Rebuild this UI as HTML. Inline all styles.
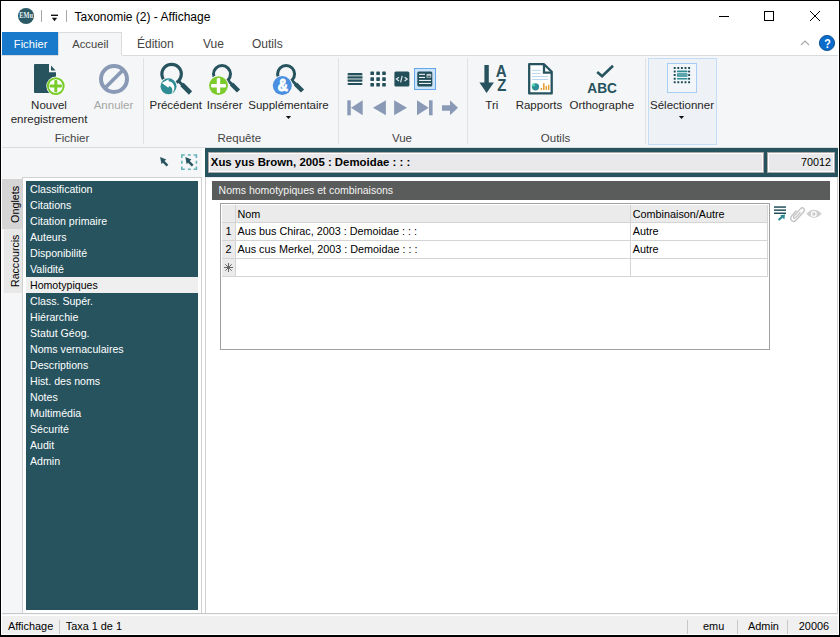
<!DOCTYPE html>
<html><head><meta charset="utf-8">
<style>
*{margin:0;padding:0;box-sizing:border-box}
html,body{width:840px;height:637px;overflow:hidden;background:#000}
body{position:relative;font-family:"Liberation Sans",sans-serif;color:#333}
.a{position:absolute}
.t{position:absolute;white-space:nowrap;line-height:1}
.c{position:absolute;white-space:nowrap;line-height:1;width:120px;text-align:center}
.rl{font-size:11.5px;color:#262626}
.gl{font-size:11.5px;color:#444}
.li{position:absolute;left:30px;font-size:10.6px;color:#fff;white-space:nowrap;line-height:1}
.g{font-size:10.8px;color:#000}
svg{position:absolute;left:0;top:0}
</style></head><body>
<!-- window -->
<div class="a" style="left:1px;top:1px;width:838px;height:634px;background:#fff"></div>

<!-- title bar -->
<div class="t" style="left:74.5px;top:11px;font-size:12px;color:#000">Taxonomie (2) - Affichage</div>

<!-- tabs -->
<div class="a" style="left:2px;top:32px;width:56px;height:23px;background:#1979ca"></div>
<div class="t" style="left:13.8px;top:38.6px;font-size:11.2px;color:#fff">Fichier</div>
<div class="a" style="left:58px;top:32px;width:64px;height:24px;background:#f5f6f7;border:1px solid #dadbdc;border-bottom:none"></div>
<div class="t" style="left:72.3px;top:38.6px;font-size:11.2px;color:#444">Accueil</div>
<div class="t" style="left:137px;top:38px;font-size:12px;color:#444">Édition</div>
<div class="t" style="left:203px;top:38px;font-size:12px;color:#444">Vue</div>
<div class="t" style="left:252px;top:38px;font-size:12px;color:#444">Outils</div>

<!-- ribbon -->
<div class="a" style="left:2px;top:55px;width:836px;height:560px;background:#f5f6f7"></div>
<div class="a" style="left:2px;top:55px;width:56px;height:1px;background:#dadbdc"></div>
<div class="a" style="left:122px;top:55px;width:716px;height:1px;background:#dadbdc"></div>
<div class="a" style="left:2px;top:147px;width:836px;height:1px;background:#dadbdc"></div>
<div class="a" style="left:143px;top:58px;width:1px;height:86px;background:#e1e2e3"></div>
<div class="a" style="left:338px;top:58px;width:1px;height:86px;background:#e1e2e3"></div>
<div class="a" style="left:467px;top:58px;width:1px;height:86px;background:#e1e2e3"></div>
<div class="a" style="left:645px;top:58px;width:1px;height:86px;background:#e1e2e3"></div>
<!-- selected box -->
<div class="a" style="left:648px;top:58px;width:69px;height:87px;background:#eef2f7;border:1px solid #c4dcf5"></div>
<div class="a" style="left:667px;top:63px;width:30px;height:30px;background:#f3f6f9;border:1px solid #a8cdf5"></div>
<!-- selected view icon frame -->
<div class="a" style="left:414px;top:68px;width:22px;height:22px;background:#cce4f7;border:1px solid #66a7e8"></div>

<!-- ribbon labels -->
<div class="c rl" style="left:-11px;top:100.3px">Nouvel</div>
<div class="c rl" style="left:-11px;top:113.8px">enregistrement</div>
<div class="c rl" style="left:53.5px;top:100.3px;color:#a6a6a6">Annuler</div>
<div class="c rl" style="left:115.7px;top:100.3px">Précédent</div>
<div class="c rl" style="left:164.6px;top:100.3px">Insérer</div>
<div class="c rl" style="left:228.5px;top:100.3px">Supplémentaire</div>
<div class="c rl" style="left:431.8px;top:100.3px">Tri</div>
<div class="c rl" style="left:479px;top:100.3px">Rapports</div>
<div class="c rl" style="left:541.8px;top:100.3px">Orthographe</div>
<div class="c rl" style="left:622px;top:100.3px">Sélectionner</div>
<div class="c gl" style="left:12px;top:133.3px">Fichier</div>
<div class="c gl" style="left:179.3px;top:133.3px">Requête</div>
<div class="c gl" style="left:342px;top:133.3px">Vue</div>
<div class="c gl" style="left:495.5px;top:133.3px">Outils</div>

<!-- left panel -->
<div class="a" style="left:2px;top:179px;width:20px;height:50px;background:#d5d5d5"></div>
<div class="a" style="left:4px;top:229px;width:18px;height:64px;background:#e8e8e8"></div>
<div class="a" style="left:22px;top:177px;width:180px;height:437px;background:#fff;border:1px solid #d0d0d0"></div>
<div class="a" style="left:26px;top:181px;width:172px;height:429px;background:#26535e"></div>
<div class="a" style="left:26px;top:277px;width:172px;height:16px;background:#efefef"></div>
<div class="li" style="top:184px">Classification</div>
<div class="li" style="top:200px">Citations</div>
<div class="li" style="top:216px">Citation primaire</div>
<div class="li" style="top:232px">Auteurs</div>
<div class="li" style="top:248px">Disponibilité</div>
<div class="li" style="top:264px">Validité</div>
<div class="li" style="top:280px;color:#000">Homotypiques</div>
<div class="li" style="top:296px">Class. Supér.</div>
<div class="li" style="top:312px">Hiérarchie</div>
<div class="li" style="top:328px">Statut Géog.</div>
<div class="li" style="top:344px">Noms vernaculaires</div>
<div class="li" style="top:360px">Descriptions</div>
<div class="li" style="top:376px">Hist. des noms</div>
<div class="li" style="top:392px">Notes</div>
<div class="li" style="top:408px">Multimédia</div>
<div class="li" style="top:424px">Sécurité</div>
<div class="li" style="top:440px">Audit</div>
<div class="li" style="top:456px">Admin</div>
<div class="t" style="left:10.3px;top:222.8px;font-size:10.8px;color:#000;transform-origin:0 0;transform:rotate(-90deg)">Onglets</div>
<div class="t" style="left:10.3px;top:287px;font-size:10.6px;color:#000;transform-origin:0 0;transform:rotate(-90deg)">Raccourcis</div>

<!-- right panel -->
<div class="a" style="left:202px;top:148px;width:3px;height:466px;background:#fff"></div>
<div class="a" style="left:205px;top:148px;width:633px;height:29px;background:#26535e"></div>
<div class="a" style="left:208px;top:152px;width:556px;height:21px;background:#e9e9eb;border:1px solid #aaa6a6;box-shadow:inset 0 0 0 1px #fff"></div>
<div class="a" style="left:767px;top:152px;width:68px;height:21px;background:#e9e9eb;border:1px solid #aaa6a6;box-shadow:inset 0 0 0 1px #fff"></div>
<div class="t" style="left:210.8px;top:156.5px;font-size:11.4px;font-weight:bold;color:#000">Xus yus Brown, 2005 : Demoidae : : :</div>
<div class="t" style="left:790px;top:157px;font-size:10.8px;color:#000;width:41px;text-align:right">70012</div>

<div class="a" style="left:205px;top:177px;width:633px;height:437px;background:#fff;border-top:1px solid #ebe9e9;border-left:1px solid #d0d0d0;border-right:1px solid #d0d0d0;border-bottom:1px solid #c8c8c8"></div>
<div class="a" style="left:212px;top:181px;width:618px;height:19px;background:#5a5c5b"></div>
<div class="t" style="left:218.6px;top:185px;font-size:10.5px;color:#f4f4f4">Noms homotypiques et combinaisons</div>

<!-- grid -->
<div class="a" style="left:220px;top:203px;width:550px;height:147px;background:#fff;border:1px solid #a0a0a0"></div>
<div class="a" style="left:222px;top:205px;width:546px;height:17px;background:#ebebeb"></div>
<div class="a" style="left:222px;top:205px;width:13px;height:72px;background:#ebebeb"></div>
<div class="a" style="left:222px;top:222px;width:546px;height:1px;background:#d4d4d4"></div>
<div class="a" style="left:222px;top:240px;width:546px;height:1px;background:#d4d4d4"></div>
<div class="a" style="left:222px;top:258px;width:546px;height:1px;background:#d4d4d4"></div>
<div class="a" style="left:222px;top:276px;width:546px;height:1px;background:#d4d4d4"></div>
<div class="a" style="left:235px;top:205px;width:1px;height:72px;background:#d4d4d4"></div>
<div class="a" style="left:630px;top:205px;width:1px;height:72px;background:#d4d4d4"></div>
<div class="a" style="left:767px;top:205px;width:1px;height:72px;background:#d4d4d4"></div>
<div class="t g" style="left:237.5px;top:209px">Nom</div>
<div class="t g" style="left:632.8px;top:209px">Combinaison/Autre</div>
<div class="t g" style="left:225.5px;top:226px">1</div>
<div class="t g" style="left:237.5px;top:226px">Aus bus Chirac, 2003 : Demoidae : : :</div>
<div class="t g" style="left:632.8px;top:226px">Autre</div>
<div class="t g" style="left:225.5px;top:244px">2</div>
<div class="t g" style="left:237.5px;top:244px">Aus cus Merkel, 2003 : Demoidae : : :</div>
<div class="t g" style="left:632.8px;top:244px">Autre</div>

<!-- status bar -->
<div class="a" style="left:2px;top:613px;width:836px;height:1px;background:#c8c8c8"></div>
<div class="a" style="left:2px;top:616px;width:836px;height:18px;background:#f0f0f0"></div>
<div class="t" style="left:8px;top:620.5px;font-size:10.9px;color:#000">Affichage</div>
<div class="a" style="left:59px;top:620px;width:1px;height:14px;background:#c8c8c8"></div>
<div class="t" style="left:65.7px;top:620.5px;font-size:10.9px;color:#000">Taxa 1 de 1</div>
<div class="a" style="left:687px;top:620px;width:1px;height:14px;background:#c8c8c8"></div>
<div class="a" style="left:737px;top:620px;width:1px;height:14px;background:#c8c8c8"></div>
<div class="a" style="left:787px;top:620px;width:1px;height:14px;background:#c8c8c8"></div>
<div class="t" style="left:703px;top:620.5px;font-size:10.9px;color:#000">emu</div>
<div class="t" style="left:748px;top:620.5px;font-size:10.9px;color:#000">Admin</div>
<div class="t" style="left:798.8px;top:620.5px;font-size:10.9px;color:#000">20006</div>

<!-- ICONS -->
<svg width="840" height="637" viewBox="0 0 840 637">
<!-- EMu logo -->
<circle cx="26" cy="16" r="8" fill="#2b5a66"/>
<text x="19.3" y="18" font-family="Liberation Serif" font-size="7.6" font-weight="bold" fill="#e6eef0" textLength="13.6" lengthAdjust="spacingAndGlyphs">EMu</text>
<rect x="41" y="10" width="1" height="12" fill="#a8a8a8"/>
<rect x="66" y="10" width="1" height="12" fill="#a8a8a8"/>
<rect x="51" y="14.6" width="7" height="1.4" fill="#111"/>
<path d="M51.8 17.8 H57.2 L54.5 21.2 Z" fill="#111"/>
<!-- window controls -->
<rect x="719" y="16" width="10" height="1" fill="#000"/>
<rect x="764.5" y="11.5" width="9" height="9" fill="none" stroke="#000" stroke-width="1"/>
<path d="M810 11 L820 21 M820 11 L810 21" stroke="#000" stroke-width="1"/>
<!-- caret + help -->
<path d="M801 45 L805 41 L809 45" fill="none" stroke="#a6a6a6" stroke-width="1.1"/>
<circle cx="827" cy="43" r="7.6" fill="#0b6ccb" stroke="#0c4d8e" stroke-width="0.9"/>
<text transform="translate(827.4,47.8) scale(0.82,1)" text-anchor="middle" font-family="Liberation Sans" font-size="13" font-weight="bold" fill="#fff">?</text>
<!-- new doc -->
<path d="M34 65 Q34 64 35 64 H49 V72.3 H56 V92 Q56 93 55 93 H35 Q34 93 34 92 Z" fill="#26535e"/>
<path d="M51 65.6 L55.6 70.4 H51 Z" fill="#26535e"/>
<circle cx="55.8" cy="86.1" r="9.5" fill="#fff"/>
<circle cx="55.8" cy="86.1" r="7.9" fill="#fff" stroke="#78cd2a" stroke-width="2"/>
<rect x="49.6" y="84.6" width="12.4" height="3" rx="1" fill="#78cd2a"/>
<rect x="54.3" y="79.9" width="3" height="12.4" rx="1" fill="#78cd2a"/>
<!-- annuler -->
<circle cx="114" cy="79" r="13" fill="none" stroke="#8a9ab6" stroke-width="4"/>
<path d="M123.5 69.5 L104.5 88.5" stroke="#8a9ab6" stroke-width="3.8"/>
<!-- magnifier precedent -->
<circle cx="171.6" cy="74.1" r="9.75" fill="none" stroke="#26535e" stroke-width="3.1"/>
<path d="M178.5 81 L183 85.5" stroke="#26535e" stroke-width="3"/>
<path d="M182 84.5 L190.5 93" stroke="#26535e" stroke-width="4.6"/>
<circle cx="168.5" cy="86.3" r="9" fill="#f5f6f7"/>
<circle cx="168.5" cy="86.3" r="8" fill="#2e8c94"/>
<path d="M161.8 83.1 L168.6 79.3 L168.6 81.2 C172.5 81.6 175 85 174.3 89 C173.8 91.5 172.5 93 171.2 93.8 C172.8 91.5 172.9 88.5 170.6 86.8 C170.1 86.5 169.4 86.3 168.8 86.4 L168.4 87.8 Z" fill="#fff"/>
<!-- magnifier inserer -->
<circle cx="222" cy="74.1" r="8.5" fill="none" stroke="#26535e" stroke-width="3"/>
<path d="M228 80.5 L232 84.5" stroke="#26535e" stroke-width="3"/>
<path d="M231.5 84 L238.5 91" stroke="#26535e" stroke-width="4.4"/>
<circle cx="218.5" cy="85.6" r="10.3" fill="#f5f6f7"/>
<circle cx="218.5" cy="85.6" r="9.4" fill="#7ccb2c"/>
<rect x="211" y="84" width="15" height="3.4" rx="1.2" fill="#fff"/>
<rect x="216.8" y="78.1" width="3.4" height="15" rx="1.2" fill="#fff"/>
<!-- magnifier supplementaire -->
<circle cx="286.1" cy="74" r="8.5" fill="none" stroke="#26535e" stroke-width="3"/>
<path d="M292 80.5 L296 84.5" stroke="#26535e" stroke-width="3"/>
<path d="M295.5 84 L302.5 91" stroke="#26535e" stroke-width="4.4"/>
<circle cx="282.3" cy="85.6" r="10.3" fill="#f5f6f7"/>
<circle cx="282.3" cy="85.6" r="9.5" fill="#4a8fe0"/>
<text transform="translate(282.8,91.3) scale(0.88,1)" text-anchor="middle" font-family="Liberation Sans" font-size="16" font-weight="bold" fill="#fff" stroke="#fff" stroke-width="0.9">&amp;</text>
<path d="M285.9 116 H291.1 L288.5 119.1 Z" fill="#111"/>
<!-- view icons -->
<rect x="347.5" y="75" width="15" height="5" fill="#9fb2b7"/>
<rect x="347.5" y="73" width="15" height="2" rx="1" fill="#234f5a"/>
<rect x="347.5" y="76.4" width="15" height="1.9" rx="0.9" fill="#234f5a"/>
<rect x="347.5" y="79.8" width="15" height="1.9" rx="0.9" fill="#234f5a"/>
<rect x="347.5" y="83" width="15" height="2" rx="1" fill="#234f5a"/>
<g fill="#234f5a">
<rect x="370.4" y="71.5" width="3.6" height="3.6" rx="0.6"/><rect x="376.3" y="71.5" width="3.6" height="3.6" rx="0.6"/><rect x="382.2" y="71.5" width="3.6" height="3.6" rx="0.6"/>
<rect x="370.4" y="77.3" width="3.6" height="3.6" rx="0.6"/><rect x="376.3" y="77.3" width="3.6" height="3.6" rx="0.6"/><rect x="382.2" y="77.3" width="3.6" height="3.6" rx="0.6"/>
<rect x="370.4" y="83" width="3.6" height="3.6" rx="0.6"/><rect x="376.3" y="83" width="3.6" height="3.6" rx="0.6"/><rect x="382.2" y="83" width="3.6" height="3.6" rx="0.6"/>
</g>
<rect x="394.4" y="71.5" width="15" height="15" rx="1.5" fill="#234f5a"/>
<path d="M399 77.2 L396.4 79.1 L399 81 M402.2 75.8 L400.6 82.3 M404.6 77.2 L407.2 79.1 L404.6 81" fill="none" stroke="#e2e8ea" stroke-width="1.2"/>
<rect x="417.3" y="71.5" width="15" height="15" rx="1.5" fill="#234f5a"/>
<g fill="#fff">
<rect x="419" y="73.8" width="6" height="1"/>
<rect x="426.6" y="73.9" width="4.6" height="3.7" fill="#c9d3d6"/>
<rect x="427.4" y="75.7" width="3" height="1.3" fill="#46666e"/>
<rect x="419" y="76.9" width="6" height="1"/>
<rect x="419" y="79.9" width="12" height="1"/>
<rect x="419" y="82.9" width="12" height="1"/>
</g>
<!-- nav icons -->
<g fill="#8a9ab6">
<rect x="347.3" y="100.3" width="3.5" height="15"/>
<path d="M351 107.8 L362.7 100.3 V115.3 Z"/>
<path d="M373 107.8 L385.9 100.3 V115.3 Z"/>
<path d="M407 107.8 L394.1 100.3 V115.3 Z"/>
<path d="M428.7 107.8 L417 100.3 V115.3 Z"/>
<rect x="429" y="100.3" width="3.6" height="15"/>
<path d="M442 105.3 H450 V100.3 L458 107.8 L450 115.3 V110.8 H442 Z"/>
</g>
<!-- tri -->
<g fill="#26535e">
<rect x="484.4" y="65" width="4.4" height="18"/>
<path d="M479.4 82.6 H493.9 L486.6 93 Z"/>
<text transform="translate(501.3,77) scale(0.89,1)" text-anchor="middle" font-family="Liberation Sans" font-size="17" font-weight="bold">A</text>
<text transform="translate(501.85,91) scale(0.875,1)" text-anchor="middle" font-family="Liberation Sans" font-size="17" font-weight="bold">Z</text>
</g>
<!-- rapports -->
<path d="M529.2 64.2 H544 L551.7 71.8 V93.4 H529.2 Z" fill="#fff" stroke="#26535e" stroke-width="2.3" stroke-linejoin="round"/>
<path d="M544 64.2 V72.6 H551.7" fill="none" stroke="#26535e" stroke-width="2.3"/>
<g fill="#b9d9f1">
<rect x="532" y="69.9" width="8.5" height="1"/>
<rect x="532" y="73" width="8.5" height="1"/>
<rect x="532" y="76" width="16" height="1"/>
<rect x="532" y="79" width="16" height="1"/>
</g>
<circle cx="535.5" cy="86.8" r="3.6" fill="#2e8c94"/>
<path d="M535 86.3 V82.9 A3.6 3.6 0 0 0 531.6 86.3 Z" fill="#52d3b2"/>
<g fill="#e9a23a">
<rect x="540.6" y="88" width="1.5" height="2"/>
<rect x="543" y="83.2" width="1.6" height="6.8"/>
<rect x="545.5" y="86" width="1.5" height="4"/>
<rect x="547.9" y="84.8" width="1.5" height="5.2"/>
</g>
<!-- orthographe -->
<path d="M597.2 72 L602.1 76.2 L613 65.8" fill="none" stroke="#26535e" stroke-width="2.6"/>
<text x="602.1" y="92.7" text-anchor="middle" font-family="Liberation Sans" font-size="15" font-weight="bold" fill="#26535e" textLength="29.6" lengthAdjust="spacingAndGlyphs">ABC</text>
<!-- selectionner icon -->
<g fill="#1f4c57"><rect x="673.7" y="66.9" width="2" height="2" rx="0.4"/><rect x="673.7" y="70.5" width="2" height="2" rx="0.4"/><rect x="673.7" y="74.1" width="2" height="2" rx="0.4"/><rect x="673.7" y="77.7" width="2" height="2" rx="0.4"/><rect x="673.7" y="81.2" width="2" height="2" rx="0.4"/><rect x="677.3" y="66.9" width="2" height="2" rx="0.4"/><rect x="677.3" y="81.2" width="2" height="2" rx="0.4"/><rect x="680.9" y="66.9" width="2" height="2" rx="0.4"/><rect x="680.9" y="81.2" width="2" height="2" rx="0.4"/><rect x="684.5" y="66.9" width="2" height="2" rx="0.4"/><rect x="684.5" y="81.2" width="2" height="2" rx="0.4"/><rect x="688.1" y="66.9" width="2" height="2" rx="0.4"/><rect x="688.1" y="70.5" width="2" height="2" rx="0.4"/><rect x="688.1" y="74.1" width="2" height="2" rx="0.4"/><rect x="688.1" y="77.7" width="2" height="2" rx="0.4"/><rect x="688.1" y="81.2" width="2" height="2" rx="0.4"/></g>
<rect x="677" y="70.6" width="10.5" height="1.6" rx="0.6" fill="#2e8c94"/>
<rect x="677" y="73.2" width="10.5" height="3.6" rx="0.8" fill="#2e8c94"/>
<rect x="677.5" y="74.5" width="9.5" height="1" fill="#86bfc3"/>
<rect x="677" y="77.9" width="10.5" height="1.6" rx="0.6" fill="#2e8c94"/>
<path d="M678.9 116 H684.1 L681.5 119.1 Z" fill="#111"/>
<!-- pointer icons -->
<path d="M160.1 157.1 L166.2 159.5 L164.6 161.1 L168.3 164.8 L166.6 166.5 L162.9 162.8 L161.5 164.2 Z" fill="#26535e"/>
<path d="M181.8 158 V155 H184.8 M187.8 155 H190.8 M193.6 155 H196.4 V158 M181.8 160.8 V163.8 M196.4 160.8 V163.8 M181.8 166.5 V169.2 H184.8 M187.8 169.2 H190.8 M193.6 169.2 H196.4 V166.5" fill="none" stroke="#66b3b9" stroke-width="1.6"/>
<path d="M185.3 157.1 L191.4 159.5 L189.8 161.1 L193.5 164.8 L191.8 166.5 L188.1 162.8 L186.7 164.2 Z" fill="#26535e"/>
<!-- grid side icons -->
<g fill="#234f5a">
<rect x="774" y="206.3" width="12" height="1.5"/>
<rect x="774" y="209.4" width="12" height="1.5"/>
<rect x="774" y="212.5" width="12" height="1.5"/>
</g>
<path d="M778.6 220 L782.6 216.4" fill="none" stroke="#2e8c94" stroke-width="2.2"/>
<path d="M780.2 215.2 L785 214.6 L784.4 219.4 Z" fill="#2e8c94"/>
<path d="M796.5 210.5 L792 215.5 Q789.5 218.5 791.7 220.6 Q793.9 222.6 796.5 219.8 L803.5 212 Q805.2 210 803.8 208.4 Q802.3 207 800.4 208.9 L794 216 Q793 217.3 793.8 218 Q794.6 218.8 795.7 217.6 L800.5 212.3" fill="none" stroke="#c4c4c4" stroke-width="1.35"/>
<path d="M806.3 213.8 Q814 205.5 821.7 213.8 Q814 222 806.3 213.8 Z" fill="#cdcdcd"/>
<circle cx="813.8" cy="214" r="3" fill="#fff"/>
<circle cx="813.8" cy="214" r="1.8" fill="#cdcdcd"/>
<!-- grid new-row star -->
<path d="M228.5 263 V272 M224 267.5 H233 M225.3 264.3 L231.7 270.7 M231.7 264.3 L225.3 270.7" stroke="#666" stroke-width="1"/>
</svg>
</body></html>
